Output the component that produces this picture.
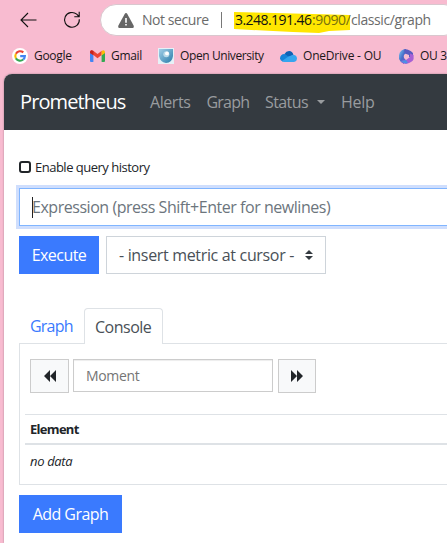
<script>
  const metrics = ['- insert metric at cursor -'];
</script>

<div class="browser">
  <div class="toolbar">
    <svg class="back" width="18" height="16" viewBox="0 0 18 16"><path d="M16.5 8H1M8 1 1 8l7 7" /></svg>
    <svg class="reload" width="18" height="18" viewBox="0 0 18 18"><path d="M16.3 8.2A7.4 7.4 0 1 1 13.7 3.2L16 5.5M16.2.8v4.9h-4.9" /></svg>
    <div class="address">
      <svg class="warn" width="16" height="15" viewBox="0 0 16 15">
        <path d="M8 0Q8.8 0 9.3.9L15.6 12.6Q16.3 14.8 14.6 15H1.4Q-.3 14.8.4 12.6L6.7.9Q7.2 0 8 0Z" fill="#666" />
        <path d="M8 5v4.7M8 11v1.6" stroke="#fff" stroke-width="1.6" />
      </svg>
      <span class="insecure">Not secure</span>
      <span class="divider"></span>
      <span class="url">
        <svg class="marker" width="118" height="22" viewBox="0 0 118 22"><path d="M1 0 41 1 80 2 117 3V18L96 19 86 21 60 20 40 19 1 17Z" fill="#ffe600" /></svg>
        <span class="host">3.248.191.46</span><span class="port">:9090/</span><span class="path">classic/graph</span>
      </span>
    </div>
  </div>
  <div class="bookmarks">
    <span class="bm google">
      <svg width="16" height="16" viewBox="0 0 16 16"><circle cx="8" cy="8" r="8" fill="#fff" /><g fill="none" stroke-width="2.1"><path d="M3.9 5.7A4.8 4.8 0 0 1 11.3 4.4" stroke="#ea4335" /><path d="M3.9 5.7A5 5 0 0 0 3.9 10.4" stroke="#fbbc05" /><path d="M3.9 10.4A4.8 4.8 0 0 0 11.2 11.5" stroke="#34a853" /><path d="M11.2 11.5A4.9 4.9 0 0 0 12.9 8.1H8.2" stroke="#4285f4" /></g></svg>
      <span>Google</span>
    </span>
    <span class="bm gmail">
      <svg width="15" height="12" viewBox="0 0 15 12"><path d="M0 2.5 3.4 5V12H1Q0 12 0 11Z" fill="#4285f4" /><path d="M15 2.5 11.6 5V12H14Q15 12 15 11Z" fill="#34a853" /><path d="M0 2Q.5-.8 3.2.8L7.5 4 11.8.8 11.6 5 7.5 8.2 3.4 5.1 0 3Z" fill="#ea4335" /><path d="M11.6 1 Q14.5-.8 15 2V3L11.6 5.5Z" fill="#fbbc04" /><path d="M0 2Q.5-.8 3.4 1V5.3L0 3Z" fill="#c5221f" /></svg>
      <span>Gmail</span>
    </span>
    <span class="bm ou">
      <svg width="16" height="16" viewBox="0 0 16 16"><defs><linearGradient id="shield" x1="0" y1="0" x2="1" y2="1"><stop offset="0" stop-color="#a3d0e8" /><stop offset="1" stop-color="#287ba9" /></linearGradient></defs><path d="M0 0H16V16H0Z" fill="#e6f1f7" /><path d="M1 1H15V8Q14 15 8 15 2 14 1 8Z" fill="url(#shield)" /><circle cx="8.3" cy="6.3" r="3" fill="#b9dae9" /><circle cx="9" cy="5.4" r="1.9" fill="#fff" /></svg>
      <span>Open University</span>
    </span>
    <span class="bm drive">
      <svg width="17" height="11" viewBox="0 0 17 11"><path d="M4.5 3.1Q6.2 0 9.2.1 12.3.2 13.4 3.8L8 7Z" fill="#0f62b5" /><path d="M0 7.2Q.3 3.4 4.5 3.1L11 7 2.5 10.5Q.2 9.5 0 7.2Z" fill="#1683d8" /><path d="M8.5 5.5 13.4 3.8Q17 4.5 17 7.6 16.6 10.8 14 11H4Q2.7 10.9 2 10Z" fill="#36a5ee" /></svg>
      <span>OneDrive - OU</span>
    </span>
    <span class="bm m365">
      <svg width="15" height="15" viewBox="0 0 15 15"><defs><linearGradient id="hexa" x1="0" y1="0" x2="1" y2="1"><stop offset="0" stop-color="#7fcaf2" /><stop offset=".5" stop-color="#496fc9" /><stop offset="1" stop-color="#7848c6" /></linearGradient></defs><path d="M7 0Q1 .5 0 6V10Q1 13 5 15L7 11Q4 9 5 6L7 4Z" fill="url(#hexa)" /><path d="M5 .5Q9-.6 14 4V9L10 8V6L6 4.5Z" fill="#595bc1" /><path d="M14.6 6V10Q14 13 7 15 3.5 14.8 2 12L7 11 11 8V4.5Z" fill="#a65fd5" /><path d="M2 12 7 11 9 14Q5 15.5 2 12Z" fill="#4d8fe5" /></svg>
      <span>OU 3</span>
    </span>
  </div>

  <div class="page">
    <nav>
      <span class="brand">Prometheus</span>
      <span class="nav alerts">Alerts</span>
      <span class="nav graph">Graph</span>
      <span class="nav status">Status</span><i class="caret"></i>
      <span class="nav help">Help</span>
    </nav>
    <main>
      <label class="history"><span class="box"></span><span>Enable query history</span></label>
      <div class="expression"><span class="cursor"></span><span class="ph">Expression (press Shift+Enter for newlines)</span></div>
      <div class="actions">
        <div class="btn execute"><span>Execute</span></div>
        <div class="select">
          <span>{metrics[0]}</span>
          <svg width="8" height="10" viewBox="0 0 8 10"><path d="M0 4 4 0 8 4ZM0 6H8L4 10Z" fill="#343a40" /></svg>
        </div>
      </div>
      <div class="tabs">
        <div class="tab link"><span>Graph</span></div>
        <div class="tab active"><span>Console</span></div>
      </div>
      <section>
        <div class="moment">
          <div class="step"><svg width="12" height="12" viewBox="0 0 12 12"><path d="M6 0V12L0 6ZM12 0V12L6 6Z" fill="#212529" /></svg></div>
          <div class="time"><span>Moment</span></div>
          <div class="step next"><svg width="12" height="12" viewBox="0 0 12 12"><path d="M0 0V12L6 6ZM6 0V12L12 6Z" fill="#212529" /></svg></div>
        </div>
        <div class="table">
          <div class="th"><span>Element</span></div>
          <div class="td"><span>no data</span></div>
        </div>
      </section>
      <div class="btn add"><span>Add Graph</span></div>
    </main>
  </div>
</div>

<style>
  :global(body) { margin: 0; overflow: hidden; }
  * { box-sizing: border-box; }
  svg { display: block; flex: none; }
  span { white-space: nowrap; }
  .browser { width: 447px; height: 543px; overflow: hidden; background: #f8bbd0; font-family: "Open Sans", "Noto Sans", sans-serif; color: #212529; }
  .toolbar { height: 40px; display: flex; align-items: center; padding-left: 20px; }
  .toolbar > svg path { fill: none; stroke: #111; stroke-width: 1.1; }
  .reload { margin-left: 25px; }
  .address { position: relative; flex: none; width: 360px; height: 32px; margin-left: 19px; background: #fff; border: 1px solid #d9c7ce; border-radius: 16px; display: flex; align-items: center; padding-left: 17px; font-size: 14px; line-height: 20px; color: #6b6b6b; }
  .insecure { margin-left: 8px; width: 68px; letter-spacing: -.43px; }
  .divider { width: 1px; height: 16px; margin-left: 11px; background: #777; }
  .url { margin-left: 13px; position: relative; display: flex; }
  .url > span { position: relative; }
  .marker { position: absolute; left: -2px; top: 2px; }
  .host { width: 77px; color: #111; letter-spacing: -.56px; }
  .port { width: 39px; color: #77700f; letter-spacing: -.4px; }
  .path { letter-spacing: -.4px; }
  .bookmarks { height: 34px; padding: 0 0 2px 12px; display: flex; align-items: center; font-size: 12px; line-height: 18px; color: #1b1719; }
  .bm { flex: none; display: flex; align-items: center; gap: 6px; letter-spacing: -.3px; }
  .google { width: 78px; }
  .gmail { width: 68px; }
  .ou { width: 122px; letter-spacing: -.4px; }
  .drive { width: 119px; letter-spacing: -.2px; }
  .page { margin-left: 4px; height: 469px; background: #fff; border-radius: 8px 0 0; overflow: hidden; box-shadow: 0 0 2px #9e7988; }
  nav { height: 56px; background: #343a40; display: flex; align-items: center; padding: 0 0 0 16px; font-size: 16px; color: #999c9f; }
  .brand { width: 130px; font-size: 20px; color: #fff; letter-spacing: -.9px; line-height: 28px; }
  .nav { letter-spacing: -.3px; }
  .alerts { width: 56.5px; letter-spacing: -.45px; }
  .graph { width: 58.5px; letter-spacing: -.8px; }
  .status { width: 52px; letter-spacing: -.6px; }
  .caret { border: 4px solid transparent; border-top-color: #999c9f; border-bottom: 0; width: 8px; }
  .help { margin-left: 16px; }
  main { padding: 27px 0 0 15px; }
  .history { display: flex; align-items: center; height: 20px; font-size: 13px; letter-spacing: -.5px; }
  .box { width: 12px; height: 12px; border: 2px solid #212529; border-radius: 3px; margin-right: 4px; }
  .expression { margin-top: 11px; width: 460px; height: 38px; border: 1px solid #80b5ff; box-shadow: 0 0 0 3px #cfdefd; display: flex; align-items: center; padding-left: 12px; font-size: 16px; color: #6c757d; }
  .cursor { width: 1px; height: 21px; background: #222; margin-right: -1px; }
  .ph { letter-spacing: -.46px; }
  .actions { display: flex; margin-top: 10px; gap: 7px; }
  .btn { background: #3a7afe; color: #fff; height: 38px; display: flex; align-items: center; justify-content: center; font-size: 16px; letter-spacing: -.55px; }
  .execute { width: 80px; }
  .select { width: 220px; height: 38px; border: 1px solid #ced4da; display: flex; align-items: center; justify-content: space-between; padding: 0 12px; font-size: 16px; color: #495057; letter-spacing: -.33px; }
  .tabs { display: flex; height: 36px; margin-top: 34px; position: relative; }
  .tab { height: 36px; font-size: 16px; display: flex; align-items: center; letter-spacing: -.5px; }
  .link { width: 65px; padding-left: 11px; color: #3a7afe; letter-spacing: -.8px; }
  .active { width: 79px; padding-left: 10px; border: 1px solid #dee2e6; border-bottom: 0; border-radius: 4px 4px 0 0; background: #fff; color: #495057; }
  section { margin-top: -1px; width: 460px; height: 142px; border: 1px solid #dee2e6; padding: 15px 0 0 5px; }
  .moment { display: flex; padding-left: 5px; }
  .step { width: 39px; height: 34px; border: 1px solid #ccc; background: #f8f9fa; display: flex; align-items: center; justify-content: center; }
  .time { width: 200px; height: 33px; margin: 0 5px 0 4px; border: 1px solid #ccc; box-shadow: inset 0 1px 1px #00000013; padding-left: 12px; display: flex; align-items: center; color: #757575; font-size: 14px; letter-spacing: -.35px; }
  .next { width: 38px; }
  .table { margin-top: 21px; border-top: 1px solid #dee2e6; font-size: 13px; }
  .th { height: 30px; padding: 0 5px; border-bottom: 2px solid #dee2e6; display: flex; align-items: center; font-weight: 700; letter-spacing: -.7px; }
  .td { height: 31px; padding: 0 5px; display: flex; align-items: center; font-style: italic; letter-spacing: -.35px; }
  .add { width: 103px; margin-top: 10px; }
</style>
